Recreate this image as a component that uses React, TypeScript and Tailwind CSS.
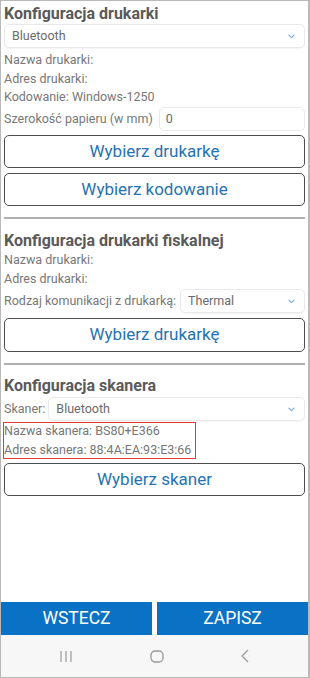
import React from "react";

const Chevron = () => (
  <svg width="7" height="5" viewBox="0 0 7 5" className="shrink-0">
    <path d="M1 1.2 L3.5 3.6 L6 1.2" fill="none" stroke="#7cb4e0" strokeWidth="1.2" strokeLinecap="round" strokeLinejoin="round" />
  </svg>
);

const Select = ({ value, className = "" }: { value: string; className?: string }) => (
  <div className={`h-[24px] flex items-center justify-between rounded-[5px] border border-[#e9e9e9] shadow-[0_1px_1px_rgba(0,0,0,0.04)] pl-[7px] pr-[9px] ${className}`}>
    <span className="text-[12.5px] text-[#6a6a6a]">{value}</span>
    <Chevron />
  </div>
);

const Label = ({ children }: { children: React.ReactNode }) => (
  <div className="h-[18.5px] leading-[18.5px] text-[12.5px] text-[#777777] whitespace-nowrap">{children}</div>
);

const Heading = ({ children, className = "" }: { children: React.ReactNode; className?: string }) => (
  <div className={`h-[20px] leading-[20px] text-[16px] font-bold text-[#5a5a5a] ${className}`}>{children}</div>
);

const OutlineButton = ({ children, className = "" }: { children: React.ReactNode; className?: string }) => (
  <div className={`h-[33px] flex items-center justify-center rounded-[5px] border-[1.5px] border-[#4d4d4d] text-[17px] text-[#2673b2] ${className}`}>
    {children}
  </div>
);

const Separator = ({ className = "" }: { className?: string }) => (
  <div className={`h-[2px] bg-[#b0b0b0] ${className}`} />
);

export default function App() {
  return (
    <div className="w-[310px] h-[678px] flex flex-col bg-white border-l border-t border-b border-r-2 border-[#b9b9b9] font-['Roboto','Noto_Sans',sans-serif]">
      <div className="flex-1 flex flex-col px-[3px] pt-[3px]">
        <Heading>Konfiguracja drukarki</Heading>
        <Select value="Bluetooth" />
        <div className="mt-[3px]">
          <Label>Nazwa drukarki:</Label>
          <Label>Adres drukarki:</Label>
          <Label>Kodowanie: Windows-1250</Label>
        </div>
        <div className="mt-[0.5px] h-[24px] flex items-center gap-[6px]">
          <span className="text-[12.5px] text-[#777777] whitespace-nowrap">Szerokość papieru (w mm)</span>
          <div className="flex-1 h-[24px] flex items-center rounded-[5px] border border-[#e9e9e9] pl-[6px] text-[12.5px] text-[#6a6a6a]">0</div>
        </div>
        <OutlineButton className="mt-[4px]">Wybierz drukarkę</OutlineButton>
        <OutlineButton className="mt-[5px]">Wybierz kodowanie</OutlineButton>
        <Separator className="mt-[11px]" />

        <Heading className="mt-[12px]">Konfiguracja drukarki fiskalnej</Heading>
        <div>
          <Label>Nazwa drukarki:</Label>
          <Label>Adres drukarki:</Label>
        </div>
        <div className="mt-[1px] h-[24px] flex items-center gap-[4px]">
          <span className="text-[12.5px] text-[#777777] whitespace-nowrap">Rodzaj komunikacji z drukarką:</span>
          <Select value="Thermal" className="flex-1" />
        </div>
        <OutlineButton className="mt-[5px] h-[34px]">Wybierz drukarkę</OutlineButton>
        <Separator className="mt-[11px]" />

        <Heading className="mt-[11px]">Konfiguracja skanera</Heading>
        <div className="mt-[1px] h-[24px] flex items-center gap-[3px]">
          <span className="text-[12.5px] text-[#777777] whitespace-nowrap">Skaner:</span>
          <Select value="Bluetooth" className="flex-1" />
        </div>
        <div className="mt-[1px] -ml-[1px] self-start h-[37px] border-[1.5px] border-[#e53935] pr-[4px] flex flex-col justify-center">
          <Label>Nazwa skanera: BS80+E366</Label>
          <Label>Adres skanera: 88:4A:EA:93:E3:66</Label>
        </div>
        <OutlineButton className="mt-[4px]">Wybierz skaner</OutlineButton>
      </div>

      <div className="h-[33px] flex gap-[5px]">
        <div className="w-[151px] bg-[#0a72c5] flex items-center justify-center text-white text-[17.5px]">WSTECZ</div>
        <div className="flex-1 bg-[#0a72c5] flex items-center justify-center text-white text-[17.5px]">ZAPISZ</div>
      </div>

      <div className="h-[42px] bg-[#f7f7f7] flex items-center justify-center gap-[76px]">
        <svg width="14" height="13" viewBox="0 0 14 13" className="shrink-0 mr-[1px]">
          <path d="M2 1 V12 M7 1 V12 M12 1 V12" stroke="#9a9a9a" strokeWidth="1.2" />
        </svg>
        <svg width="14" height="13" viewBox="0 0 14 13" className="shrink-0">
          <rect x="1" y="1" width="12" height="11" rx="4" fill="none" stroke="#9a9a9a" strokeWidth="1.3" />
        </svg>
        <svg width="10" height="14" viewBox="0 0 10 14" className="shrink-0">
          <path d="M8 1 L2 7 L8 13" fill="none" stroke="#9a9a9a" strokeWidth="1.2" />
        </svg>
      </div>
    </div>
  );
}
